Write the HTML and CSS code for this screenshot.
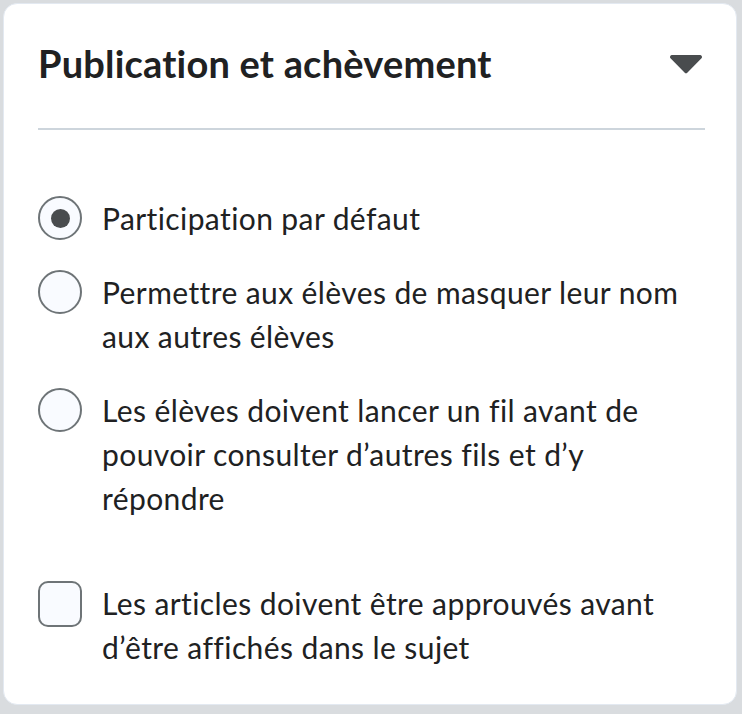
FILE: index.html
```html
<!DOCTYPE html>
<html lang="fr">
<head>
  <meta charset="UTF-8">
  <meta name="viewport" content="width=device-width, initial-scale=1">
  <title>Publication et achèvement</title>
  <link rel="stylesheet" href="styles.css">
</head>
<body>
  <div class="card">
    <div class="card-header">
      <h2>Publication et achèvement</h2>
      <svg class="caret" width="34" height="20" viewBox="0 0 34 20">
        <path d="M3 1 H31 a2 2 0 0 1 1.5 3.3 L18.5 18.5 a2 2 0 0 1 -3 0 L1.5 4.3 A2 2 0 0 1 3 1 Z" fill="#494c4e"/>
      </svg>
    </div>

    <div class="options">
      <label class="option">
        <span class="radio checked"></span>
        <span class="label-text">Participation par défaut</span>
      </label>
      <label class="option">
        <span class="radio"></span>
        <span class="label-text">Permettre aux élèves de masquer leur nom aux autres élèves</span>
      </label>
      <label class="option">
        <span class="radio"></span>
        <span class="label-text">Les élèves doivent lancer un fil avant de pouvoir consulter d’autres fils et d’y répondre</span>
      </label>
    </div>

    <label class="option approval">
      <span class="checkbox"></span>
      <span class="label-text">Les articles doivent être approuvés avant d’être affichés dans le sujet</span>
    </label>
  </div>
</body>
</html>
```

FILE: styles.css
```css
body {
  margin: 0;
  padding: 3px 5px 7px 3px;
  background: #d9dcdf;
  font-family: Lato, 'Noto Sans', sans-serif;
  color: #202122;
}

.card {
  background: #fff;
  border: 1px solid #e3e9f1;
  border-radius: 14px;
  height: 702px;
  box-sizing: border-box;
  padding: 0 31px 0 34px;
}

.card-header {
  display: flex;
  align-items: center;
  justify-content: space-between;
  height: 124px;
  border-bottom: 2px solid #cdd5dc;
}

.card-header h2 {
  margin: 0 0 6px;
  font-size: 38px;
  font-weight: 700;
  letter-spacing: 0.2px;
  line-height: 1;
}

.caret {
  margin-right: 2px;
  margin-bottom: 4px;
}

.options {
  display: flex;
  flex-direction: column;
  gap: 30px;
  margin-top: 66px;
}

.option {
  display: flex;
  align-items: flex-start;
  gap: 20px;
  font-size: 30px;
  letter-spacing: 0.4px;
  line-height: 44px;
}

.label-text {
  flex: 1;
}

.radio,
.checkbox {
  flex: none;
  width: 44px;
  height: 44px;
  box-sizing: border-box;
  border: 2px solid #6e7477;
  background: #f9fbff;
  display: flex;
  align-items: center;
  justify-content: center;
}

.radio {
  border-radius: 50%;
}

.radio.checked::after {
  content: '';
  width: 19px;
  height: 19px;
  border-radius: 50%;
  background: #494c4e;
}

.checkbox {
  border-radius: 10px;
  height: 46px;
}

.approval {
  margin-top: 61px;
}
```
